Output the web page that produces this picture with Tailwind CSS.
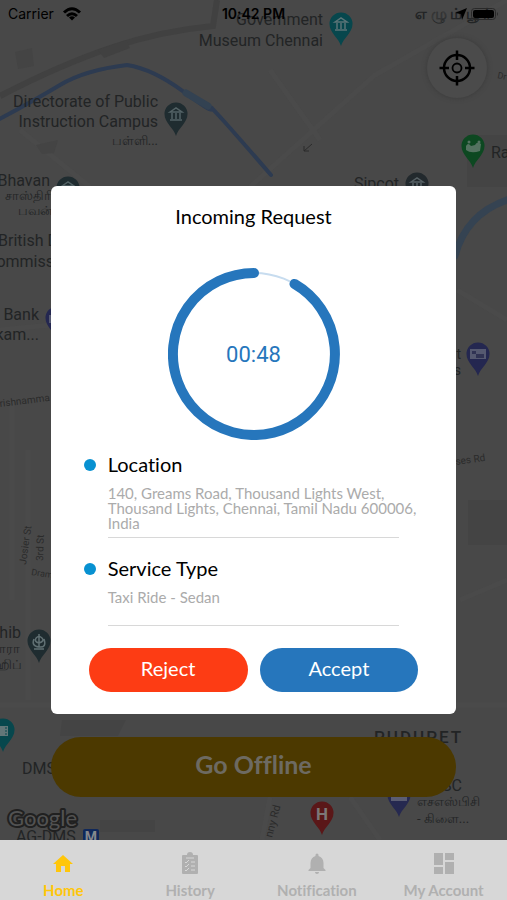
<!DOCTYPE html>
<html lang="en">

<head>
    <meta charset="UTF-8">
    <meta name="viewport" content="width=device-width, initial-scale=1">
    <title>Incoming Request</title>
    <script src="https://cdn.jsdelivr.net/npm/@tailwindcss/browser@4"></script>
</head>

<body class="min-h-screen bg-[#484848] font-['Lato',sans-serif] [font-variant-ligatures:none]">
    <div class="relative flex min-h-screen flex-col">
        <main class="relative flex flex-1 flex-col justify-between overflow-hidden">
            <!-- Map -->
            <svg class="absolute inset-0 h-full w-full" viewBox="0 0 507 840" preserveAspectRatio="xMidYMid slice"
                aria-hidden="true" font-family="Roboto, 'Noto Sans', sans-serif" fill="#222425">
                <defs>
                    <path id="pin" d="M0 17C-2 9-11.500 4-11.500-5A11.500 11.500 0 0 1 11.500-5C11.500 4 2 9 0 17Z" />
                    <g id="museum" fill="none" stroke-width="1.500">
                        <path d="M-6-7 0-11 6-7ZM-6 1H6M-4-6V0M0-6V0M4-6V0" />
                    </g>
                </defs>
                <rect width="507" height="840" fill="#484848" />
                <!-- Land and roads -->
                <g fill="none" stroke="#4a4a4a" stroke-width="5">
                    <path d="M507 0 375 75 250 187M20 130 90 187M270 70 320 140M0 330 50 325M457 290 507 320M12 400V600M28 450V700M460 600 507 580M0 705H507M270 797 262 840M350 797 380 840" />
                </g>
                <path d="M0 96Q60 65 110 48T213 26L217 0" fill="none" stroke="#414141" stroke-width="6" />
                <path d="M98 50 126 40 130 48 104 58Z" fill="#414141" />
                <path d="M36 145 58 140 54 153 42 154ZM62 720H126L118 736H60ZM15 52 32 48 34 66 18 69ZM467 135H507V187H467ZM468 500H507V545H468ZM100 820H155V832H100Z" fill="#444444" />
                <!-- River -->
                <g fill="none" stroke-linecap="round">
                    <path d="M-4 121Q35 100 60 85T127 65Q153 69 184 92T211 108T271 175" stroke="#2d3b51" stroke-width="4" />
                    <path d="M186 93 208 106" stroke="#334252" stroke-width="7" />
                    <path d="M455 256Q466 213 510 199" stroke="#354352" stroke-width="7" />
                </g>

                <!-- Place names -->
                <g font-size="16">
                    <text x="323" y="25" text-anchor="end">Government</text>
                    <text x="323" y="46" text-anchor="end">Museum Chennai</text>
                    <text x="158" y="107" text-anchor="end">Directorate of Public</text>
                    <text x="158" y="127" text-anchor="end">Instruction Campus</text>
                    <text x="50" y="186" text-anchor="end">Bhavan</text>
                    <text x="-2" y="246">British Deputy</text>
                    <text x="-14" y="267">Commission</text>
                    <text x="39" y="320" text-anchor="end">Bank</text>
                    <text x="39" y="340" text-anchor="end">kam...</text>
                    <text x="399" y="189" text-anchor="end">Sipcot</text>
                    <text x="491" y="158">Raj</text>
                    <text x="461" y="359" text-anchor="end" font-size="14">t</text>
                    <text x="461" y="375" text-anchor="end" font-size="14">s</text>
                    <text x="21" y="638" text-anchor="end">Sahib</text>
                    <text x="22" y="774">DMS</text>
                    <text x="462" y="791" text-anchor="end">SPSC</text>
                    <text x="16" y="842">AG-DMS</text>
                </g>
                <g font-size="13">
                    <text x="158" y="145" text-anchor="end">பள்ளி...</text>
                    <text x="53" y="200" text-anchor="end">சாஸ்திரி</text>
                    <text x="53" y="215" text-anchor="end">பவன்</text>
                    <text x="20" y="653" text-anchor="end">வாரா</text>
                    <text x="22" y="669" text-anchor="end">ஹிப்</text>
                    <text x="417" y="806">எசஎஸ்பிசி</text>
                    <text x="417" y="823">- கிளை...</text>
                    <text x="415" y="19" font-size="15" font-weight="700">எ ழு ம் பூ ர்</text>
                </g>
                <text x="374" y="743" font-size="17" letter-spacing="2" font-weight="500">PUDUPET</text>
                <g font-size="9" fill="#2b2b2b">
                    <text transform="translate(0 407) rotate(-7)" font-size="10">rishnamma</text>
                    <text transform="translate(456 465) rotate(-8)" font-size="10">ses Rd</text>
                    <text transform="translate(26 565) rotate(-82)" font-size="10">Josier St</text>
                    <text transform="translate(43 561) rotate(-88)" font-size="10">3rd St</text>
                    <text transform="translate(31 575) rotate(8)">Dram</text>
                    <text transform="translate(497 78) rotate(12)">Dr</text>
                    <text transform="translate(272 838) rotate(-75)" font-size="11">nny Rd</text>
                </g>
                <path d="m304 151 8-7m-8 7v-5m0 5h5" fill="none" stroke="#2b2b2b" />

                <!-- Pins -->
                <g transform="translate(341 29)"><use href="#pin" fill="#07474d" /><use href="#museum" stroke="#5b7477" /></g>
                <g transform="translate(176 119)"><use href="#pin" fill="#1f2c30" /><use href="#museum" stroke="#536265" /></g>
                <g transform="translate(68 193)"><use href="#pin" fill="#1f2c30" /><use href="#museum" stroke="#536265" /></g>
                <g transform="translate(417 189)"><use href="#pin" fill="#22292d" /><use href="#museum" stroke="#566064" /></g>
                <g transform="translate(473 151)">
                    <use href="#pin" fill="#0d4821" />
                    <path d="M-7-5Q-5-9-2-5L2-6Q4-10 8-7L7 0Q-2 3-7-1Z" fill="#547260" />
                    <circle cx="-4" cy="-9" r="1.500" fill="#547260" /><circle cx="6" cy="-9" r="1.500" fill="#547260" />
                </g>
                <g transform="translate(478 359)">
                    <use href="#pin" fill="#242750" />
                    <path d="M-8-10H8V0H-8Z" fill="#555970" /><path d="M-6-8h4v3h-4zM-2-5h8v4h-8z" fill="#303353" />
                </g>
                <g transform="translate(57 323)">
                    <use href="#pin" fill="#242750" />
                    <path d="M-8-8H0V0H-8Z" fill="#555970" />
                </g>
                <g transform="translate(39 646)">
                    <use href="#pin" fill="#1f2c30" />
                    <path d="M0-12V1M-3-8Q0-11 3-8T0-3Q-5-4-3-8M-5-7Q-8 0 0 1T5-7M-5 3H5" fill="none" stroke="#617073" stroke-width="1.500" />
                </g>
                <g transform="translate(3 735)">
                    <use href="#pin" fill="#07474d" />
                    <path d="M-5-9H5V1H-5Z" fill="#627678" /><path d="M3-8V0" stroke="#07474d" stroke-dasharray="2 1" />
                </g>
                <g transform="translate(322 818)">
                    <use href="#pin" fill="#5a1718" />
                    <text y="2" text-anchor="middle" font-size="17" font-weight="700" fill="#7c7777">H</text>
                </g>
                <g transform="translate(399 800)">
                    <use href="#pin" fill="#262950" />
                    <path d="M-8-9H8V1H-8Z" fill="#5b5d72" /><path d="M-6-4H6" stroke="#303353" stroke-width="2" />
                </g>
                <rect x="83" y="829" width="16" height="16" rx="2" fill="#10285a" />
                <text x="91" y="842" text-anchor="middle" font-size="14" font-weight="700" fill="#85888d">M</text>
                <text x="8" y="826" font-family="Lato, sans-serif" font-size="22" fill="#525252" stroke="#202020"
                    stroke-width="4" stroke-linejoin="round" paint-order="stroke">Google</text>
            </svg>

            <!-- Status bar -->
            <header class="relative flex flex-col">
                <div class="grid h-7 grid-cols-3 items-center px-2 font-['Inter',sans-serif] text-sm text-black">
                    <span class="flex items-center gap-2">Carrier
                        <svg class="h-3.5 w-5" viewBox="0 0 20 14" fill="none" stroke="currentColor" stroke-width="3"
                            aria-hidden="true">
                            <path d="M2 5.500Q10-2 18 5.500M5 9Q10 4.500 15 9" />
                            <path d="M10 13.500 7 10.500Q10 8 13 10.500Z" fill="currentColor" stroke="none" />
                        </svg>
                    </span>
                    <time class="text-center font-semibold">10:42 PM</time>
                    <span class="flex items-center justify-end gap-1">
                        <svg class="h-3 w-3" viewBox="0 0 12 12" fill="currentColor" aria-hidden="true">
                            <path d="M0 5 12 0 7 12 6 6Z" />
                        </svg>
                        <svg class="h-3 w-7" viewBox="0 0 28 12" aria-hidden="true">
                            <rect x="0.500" y="0.500" width="24" height="11" rx="3" fill="none" stroke="#292929" />
                            <rect x="2" y="2" width="21" height="8" rx="2" />
                            <path d="M26 4q2 2 0 4Z" fill="#292929" />
                        </svg>
                    </span>
                </div>
                <button type="button" aria-label="My location"
                    class="mt-2.5 mr-5 flex size-15 items-center justify-center self-end rounded-full bg-[#4b4b4b] text-black shadow-[0_0_5px_#3a3a3a]">
                    <svg class="size-9" viewBox="0 0 36 36" fill="none" stroke="currentColor" stroke-width="2.500"
                        aria-hidden="true">
                        <circle cx="18" cy="18" r="13" />
                        <circle cx="18" cy="18" r="4.500" stroke-width="1.800" />
                        <path d="M18 0.500V10M18 26V35.500M0.500 18H10M26 18H35.500" />
                    </svg>
                </button>
            </header>

            <button type="button"
                class="relative mx-auto mb-[43px] h-15 w-4/5 rounded-full bg-[#4c3900] pb-1 text-[25px] font-bold text-[#6d6a62]">Go
                Offline</button>
        </main>

        <!-- Tabs -->
        <nav class="relative grid h-15 grid-cols-4 bg-[#d7d7d7] text-[15px] leading-5 font-bold text-[#b0b0b0]">
            <a href="#" class="flex flex-col items-center justify-between pt-3 text-[#ffc60a]" aria-current="page">
                <svg class="size-6" viewBox="0 0 24 24" fill="currentColor" aria-hidden="true">
                    <path d="M10 20v-6h4v6h5v-8h3L12 3 2 12h3v8z" />
                </svg>
                Home
            </a>
            <a href="#" class="flex flex-col items-center justify-between pt-3">
                <svg class="size-6" viewBox="0 0 24 24" aria-hidden="true">
                    <path d="M5 3h4a3 3 0 0 1 6 0h4q1 0 1 1v17q0 1-1 1H5q-1 0-1-1V4q0-1 1-1Z" fill="currentColor" />
                    <path d="M8 6h8M7 10l1 1 3-3M7 14l1 1 3-3M7 18l1 1 3-3M13 10h4M13 14h4M13 18h4" fill="none"
                        stroke="#d7d7d7" />
                </svg>
                History
            </a>
            <a href="#" class="flex flex-col items-center justify-between pt-3">
                <svg class="size-6" viewBox="0 0 24 24" fill="currentColor" aria-hidden="true">
                    <path d="M12 22c1.100 0 2-.9 2-2h-4c0 1.100.9 2 2 2Zm6.500-6v-5c0-3.500-2-6-5-7V3a1.500 1.500 0 0 0-3 0v1c-3 1-5 3.500-5 7v5l-2 2v1h17v-1z" />
                </svg>
                Notification
            </a>
            <a href="#" class="flex flex-col items-center justify-between pt-3">
                <svg class="size-6" viewBox="0 0 24 24" fill="currentColor" aria-hidden="true">
                    <path d="M2 1h9v12H2zM13 1h9v7h-9zM2 15h9v7H2zM13 10h9v12h-9z" />
                </svg>
                My Account
            </a>
        </nav>

        <!-- Request dialog -->
        <div class="absolute inset-0 flex items-center justify-center">
            <section role="dialog" aria-labelledby="requestTitle"
                class="flex w-4/5 flex-col rounded-md bg-white pt-4 pb-[22px] text-black">
                <h1 id="requestTitle" class="text-center text-xl leading-7">Incoming Request</h1>

                <div class="mt-[38px] grid place-items-center">
                    <svg class="col-start-1 row-start-1 size-43" viewBox="0 0 172 172" fill="none" aria-hidden="true">
                        <circle cx="86" cy="86" r="81" stroke="#c7dcef" stroke-width="2" />
                        <path d="M126.500 15.900A81 81 0 1 1 86 5" stroke="#2676bc" stroke-width="10"
                            stroke-linecap="round" />
                    </svg>
                    <time class="col-start-1 row-start-1 font-['Roboto',sans-serif] text-[22px] text-[#2676bc]">00:48</time>
                </div>

                <div class="mt-2.5 flex gap-3 px-[33px]">
                    <span class="mt-[9px] size-3 shrink-0 rounded-full bg-[#0891d1]"></span>
                    <div class="flex-1">
                        <h2 class="text-xl leading-7">Location</h2>
                        <p class="mt-2 text-[15px] leading-[15px] text-[#ababab]">140, Greams Road, Thousand Lights West,
                            Thousand Lights, Chennai, Tamil Nadu 600006, India</p>
                        <hr class="mt-1.5 mr-6 border-[#d8d8d8]">
                    </div>
                </div>
                <div class="mt-4 flex gap-3 px-[33px]">
                    <span class="mt-[9px] size-3 shrink-0 rounded-full bg-[#0891d1]"></span>
                    <div class="flex-1">
                        <h2 class="text-xl leading-7">Service Type</h2>
                        <p class="mt-2 text-[15px] leading-[15px] text-[#ababab]">Taxi Ride - Sedan</p>
                        <hr class="mt-5 mr-6 border-[#d8d8d8]">
                    </div>
                </div>

                <div class="mt-[22px] grid grid-cols-2 gap-3 px-[38px] text-xl text-white">
                    <button type="button" class="h-11 rounded-full bg-[#fd3c14] pb-1">Reject</button>
                    <button type="button" class="h-11 rounded-full bg-[#2676bc] pb-1">Accept</button>
                </div>
            </section>
        </div>
    </div>
</body>

</html>
